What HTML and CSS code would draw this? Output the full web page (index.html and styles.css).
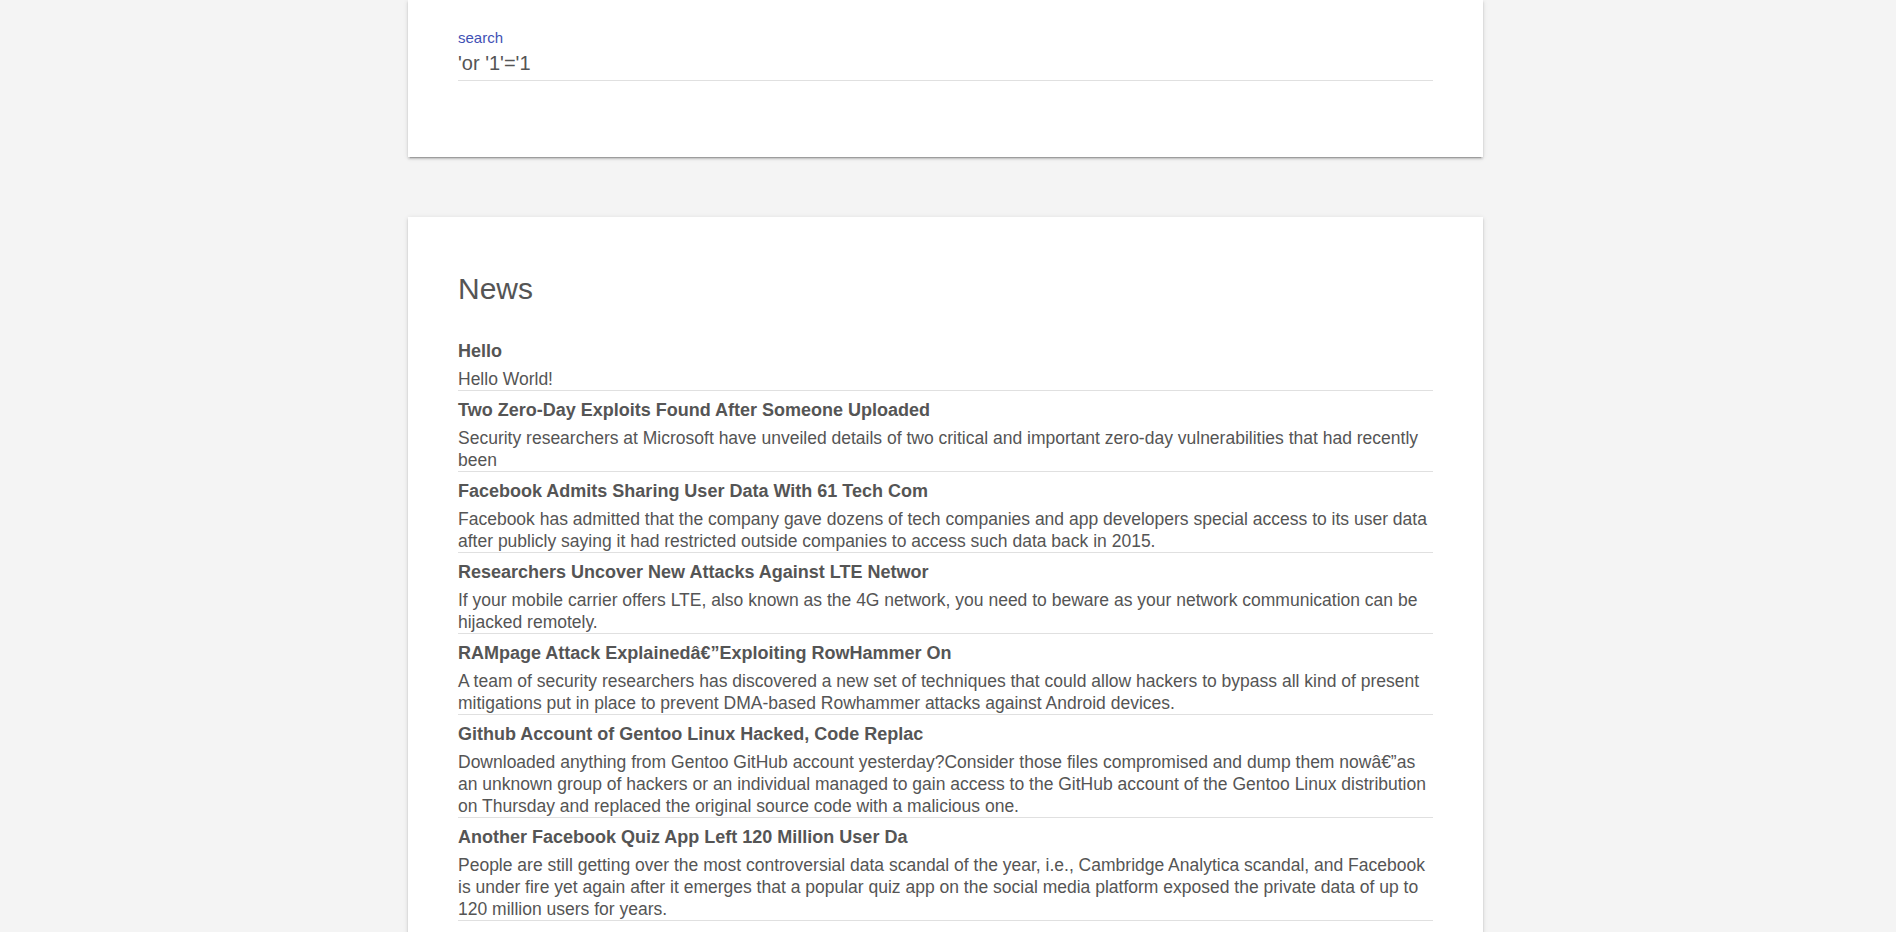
FILE: index.html
```html
<!DOCTYPE html>
<html lang="en">
<head>
<meta charset="utf-8">
<title>News</title>
<link rel="stylesheet" href="styles.css">
</head>
<body>
<div class="page">
  <section class="card search-card">
    <label class="field">
      <span class="field-label">search</span>
      <input class="field-input" type="text" value="'or '1'='1">
    </label>
  </section>
  <section class="card news-card">
    <h2 class="news-heading">News</h2>
    <ul class="news-list">
      <li class="news-item">
        <div class="news-title">Hello</div>
        <div class="news-desc">Hello World!</div>
      </li>
      <li class="news-item">
        <div class="news-title">Two Zero-Day Exploits Found After Someone Uploaded</div>
        <div class="news-desc">Security researchers at Microsoft have unveiled details of two critical and important zero-day vulnerabilities that had recently been</div>
      </li>
      <li class="news-item">
        <div class="news-title">Facebook Admits Sharing User Data With 61 Tech Com</div>
        <div class="news-desc">Facebook has admitted that the company gave dozens of tech companies and app developers special access to its user data after publicly saying it had restricted outside companies to access such data back in 2015.</div>
      </li>
      <li class="news-item">
        <div class="news-title">Researchers Uncover New Attacks Against LTE Networ</div>
        <div class="news-desc">If your mobile carrier offers LTE, also known as the 4G network, you need to beware as your network communication can be hijacked remotely.</div>
      </li>
      <li class="news-item">
        <div class="news-title">RAMpage Attack Explainedâ€”Exploiting RowHammer On</div>
        <div class="news-desc">A team of security researchers has discovered a new set of techniques that could allow hackers to bypass all kind of present mitigations put in place to prevent DMA-based Rowhammer attacks against Android devices.</div>
      </li>
      <li class="news-item">
        <div class="news-title">Github Account of Gentoo Linux Hacked, Code Replac</div>
        <div class="news-desc">Downloaded anything from Gentoo GitHub account yesterday?Consider those files compromised and dump them nowâ€”as an unknown group of hackers or an individual managed to gain access to the GitHub account of the Gentoo Linux distribution on Thursday and replaced the original source code with a malicious one.</div>
      </li>
      <li class="news-item">
        <div class="news-title">Another Facebook Quiz App Left 120 Million User Da</div>
        <div class="news-desc">People are still getting over the most controversial data scandal of the year, i.e., Cambridge Analytica scandal, and Facebook is under fire yet again after it emerges that a popular quiz app on the social media platform exposed the private data of up to 120 million users for years.</div>
      </li>
    </ul>
  </section>
</div>
</body>
</html>
```

FILE: styles.css
```css
html, body {
  margin: 0;
  padding: 0;
}

body {
  background: #f4f4f4;
  font-family: "Liberation Sans", Arial, sans-serif;
  color: #555;
}

.page {
  display: flex;
  flex-direction: column;
  align-items: center;
  gap: 60px;
  padding-right: 5px;
  padding-bottom: 60px;
}

.card {
  box-sizing: border-box;
  width: 1075px;
  background: #fff;
  box-shadow: 0 2px 2px 0 rgba(0, 0, 0, 0.14),
              0 3px 1px -2px rgba(0, 0, 0, 0.2),
              0 1px 5px 0 rgba(0, 0, 0, 0.12);
}

.search-card {
  padding: 29px 50px 76px;
}

.field {
  display: flex;
  flex-direction: column;
  gap: 4px;
}

.field-label {
  font-size: 15px;
  line-height: 18px;
  color: #3f51b5;
}

.field-input {
  box-sizing: border-box;
  width: 100%;
  margin: 0;
  padding: 0 0 5px;
  border: none;
  border-bottom: 1px solid #e0e0e0;
  outline: none;
  background: transparent;
  font-family: inherit;
  font-size: 20px;
  line-height: 24px;
  height: 30px;
  color: #555;
}

.news-card {
  padding: 52px 50px 40px;
}

.news-heading {
  margin: 0 0 23px;
  font-size: 30px;
  line-height: 40px;
  font-weight: 400;
  color: #555;
}

.news-list {
  list-style: none;
  margin: 0;
  padding: 0;
}

.news-item {
  border-bottom: 1px solid #e0e0e0;
}

.news-title {
  padding-top: 8px;
  font-size: 18px;
  line-height: 22px;
  font-weight: 700;
  color: #555;
}

.news-desc {
  margin-top: 6px;
  font-size: 17.5px;
  line-height: 22px;
  color: #555;
}
```
